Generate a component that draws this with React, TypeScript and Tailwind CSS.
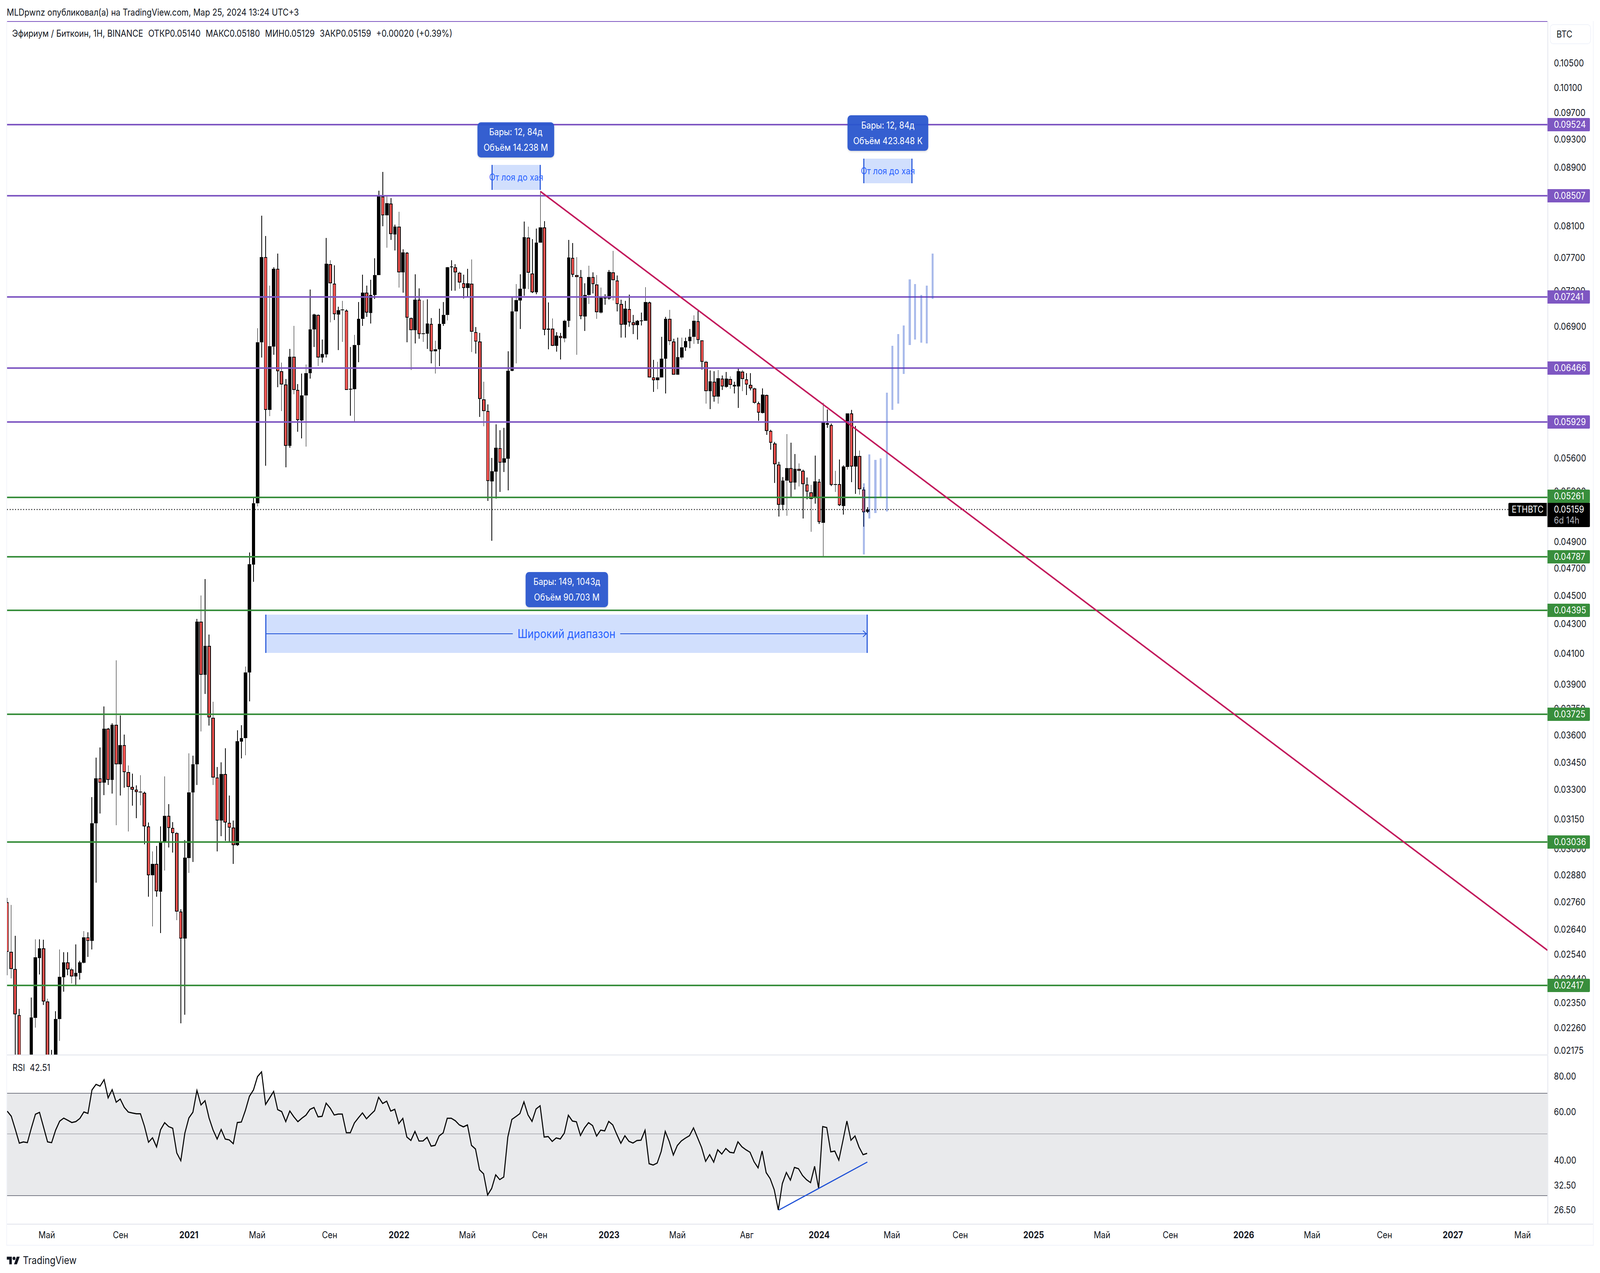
import React from "react";

// [x, high, bodyTop, bodyBottom, low, isRed], in crop coordinates, converted below
type Row = [number, number, number, number, number, 0 | 1];

const rowsLeft: Row[] = [
  [42, 1118, 1130, 1272, 1340, 1], [65, 1138, 1272, 1322, 1348, 1], [88, 1226, 1322, 1452, 1600, 1],
  [112, 1436, 1454, 1600, 1600, 1], [182, 1403, 1460, 1600, 1600, 0], [205, 1236, 1288, 1462, 1490, 0],
  [229, 1236, 1262, 1290, 1337, 0], [253, 1238, 1262, 1414, 1425, 1], [276, 1407, 1414, 1600, 1600, 1],
  [300, 1553, 1600, 1600, 1600, 0], [323, 1443, 1465, 1600, 1600, 0], [347, 1266, 1344, 1465, 1528, 0],
  [370, 1273, 1303, 1345, 1387, 0], [394, 1273, 1303, 1323, 1340, 1], [417, 1318, 1323, 1343, 1363, 1],
  [441, 1251, 1333, 1343, 1368, 0], [464, 1298, 1303, 1333, 1352, 0], [488, 1213, 1231, 1304, 1306, 0],
  [511, 1216, 1231, 1241, 1287, 1], [535, 829, 904, 1241, 1266, 0], [558, 716, 775, 904, 1074, 0],
  [582, 687, 775, 787, 876, 1], [605, 569, 633, 787, 823, 0], [629, 630, 633, 780, 794, 1],
  [653, 617, 622, 780, 819, 0], [676, 437, 622, 735, 909, 1], [700, 595, 680, 735, 824, 0],
  [723, 650, 680, 757, 802, 1], [747, 738, 757, 800, 927, 1], [770, 762, 800, 808, 853, 1],
  [794, 795, 808, 814, 889, 1], [817, 766, 813, 815, 852, 0], [841, 813, 817, 913, 964, 1],
  [864, 902, 913, 1053, 1114, 1], [888, 984, 1020, 1053, 1200, 0], [911, 969, 1020, 1099, 1114, 1],
  [935, 913, 960, 1100, 1219, 0], [958, 769, 883, 957, 1039, 0], [982, 849, 883, 917, 973, 1],
  [1005, 900, 917, 932, 988, 1], [1029, 928, 932, 1157, 1182, 1], [1052, 1150, 1157, 1234, 1477, 1],
  [1076, 952, 1002, 1234, 1453, 0], [1100, 703, 815, 1003, 1046, 0], [1123, 710, 735, 815, 1015, 0],
  [1147, 318, 326, 735, 794, 0], [1170, 251, 326, 478, 641, 1], [1194, 204, 395, 478, 533, 0],
  [1217, 363, 395, 600, 624, 1], [1241, 556, 601, 773, 794, 1], [1264, 743, 773, 896, 984, 1],
  [1288, 729, 763, 896, 941, 0], [1311, 689, 763, 902, 954, 1], [1335, 824, 903, 916, 958, 1],
  [1358, 896, 916, 966, 1020, 1], [1382, 637, 669, 966, 969, 0], [1405, 623, 660, 670, 718, 0],
  [1429, 455, 472, 660, 709, 0], [1452, 128, 161, 472, 554, 0],
];

const rowsMiddle: Row[] = [
  [83, 1370, 1393, 1639, 1708, 0], [102, 690, 746, 1393, 1405, 0], [121, 238, 405, 746, 808, 0],
  [139, 320, 405, 1017, 1242, 1], [158, 519, 762, 1017, 1043, 0], [177, 445, 452, 763, 797, 0],
  [196, 390, 451, 862, 927, 1], [214, 828, 863, 915, 1023, 1], [233, 893, 915, 1162, 1248, 1],
  [252, 773, 804, 1162, 1170, 0], [271, 681, 805, 937, 955, 1], [289, 914, 937, 1059, 1105, 1],
  [308, 872, 960, 1060, 1132, 0], [327, 835, 870, 960, 1165, 0], [346, 535, 695, 871, 892, 0],
  [365, 632, 635, 695, 765, 0], [384, 634, 636, 808, 842, 1], [403, 735, 793, 808, 828, 0],
  [422, 328, 431, 795, 808, 0], [440, 417, 432, 510, 666, 1], [459, 437, 511, 633, 657, 1],
  [478, 604, 618, 635, 778, 0], [497, 580, 615, 618, 745, 0], [516, 614, 619, 937, 937, 1],
  [535, 765, 933, 935, 1041, 0], [553, 717, 757, 935, 1066, 0], [572, 585, 653, 758, 826, 0],
  [591, 475, 547, 653, 681, 0], [610, 519, 548, 627, 645, 1], [629, 495, 556, 628, 671, 0],
  [647, 409, 477, 557, 572, 0], [666, 138, 160, 477, 477, 0], [685, 63, 162, 236, 281, 1],
  [704, 160, 188, 236, 367, 0], [723, 168, 189, 312, 335, 1], [742, 274, 282, 313, 378, 0],
  [760, 223, 283, 466, 527, 1], [779, 373, 386, 466, 547, 0], [798, 384, 387, 648, 746, 1],
  [817, 646, 649, 697, 857, 1], [836, 474, 575, 698, 751, 0], [855, 530, 576, 713, 732, 1],
  [873, 578, 710, 712, 745, 0], [892, 574, 671, 712, 773, 0], [911, 649, 672, 782, 831, 1],
  [930, 740, 775, 782, 872, 0], [948, 612, 673, 775, 842, 0], [967, 585, 637, 673, 681, 0],
  [986, 443, 445, 637, 659, 0], [1005, 417, 442, 444, 539, 0], [1023, 432, 445, 466, 540, 1],
  [1042, 463, 467, 507, 532, 1], [1061, 475, 509, 529, 570, 1], [1080, 452, 510, 529, 567, 0],
  [1099, 414, 511, 704, 785, 1], [1118, 685, 705, 743, 792, 1], [1137, 709, 744, 974, 1046, 1],
  [1155, 905, 975, 1022, 1083, 1], [1174, 996, 1023, 1303, 1383, 1], [1193, 1210, 1264, 1304, 1543, 0],
  [1212, 1075, 1170, 1265, 1373, 0], [1231, 1099, 1171, 1229, 1347, 1], [1249, 1090, 1212, 1230, 1267, 0],
  [1268, 782, 861, 1213, 1341, 0], [1287, 565, 622, 861, 862, 0], [1306, 513, 577, 623, 831, 0],
  [1325, 474, 532, 578, 693, 0], [1343, 262, 325, 532, 560, 0], [1362, 282, 326, 468, 533, 1],
  [1381, 332, 470, 546, 549, 1], [1400, 290, 347, 546, 553, 0], [1419, 140, 285, 347, 347, 0],
  [1438, 260, 285, 696, 718, 1], [1456, 586, 692, 696, 775, 0], [1475, 651, 692, 761, 762, 1],
  [1494, 706, 720, 761, 784, 0], [1513, 708, 721, 729, 815, 1], [1532, 656, 660, 730, 746, 0],
  [1550, 336, 406, 660, 685, 0],
];

const rowsRight: Row[] = [
  [80, 348, 407, 475, 485, 1], [98, 405, 476, 484, 797, 1], [117, 457, 484, 642, 654, 1],
  [136, 510, 556, 643, 701, 0], [155, 439, 484, 556, 593, 0], [174, 466, 484, 512, 550, 1],
  [192, 476, 514, 625, 652, 1], [211, 527, 565, 627, 632, 0], [230, 553, 566, 570, 596, 0],
  [249, 457, 464, 570, 575, 0], [268, 380, 465, 497, 578, 1], [287, 478, 498, 592, 622, 1],
  [305, 575, 592, 676, 728, 1], [324, 580, 612, 676, 728, 0], [343, 555, 613, 666, 684, 1],
  [362, 637, 667, 678, 713, 1], [381, 657, 660, 678, 735, 0], [400, 627, 658, 660, 679, 0],
  [418, 525, 585, 660, 660, 0], [437, 583, 586, 888, 888, 1], [456, 817, 888, 899, 945, 1],
  [475, 825, 887, 899, 935, 0], [494, 724, 812, 888, 888, 0], [512, 645, 652, 813, 952, 0],
  [531, 616, 653, 742, 757, 1], [550, 732, 743, 877, 877, 1], [569, 728, 806, 877, 877, 0],
  [588, 728, 766, 808, 816, 0], [606, 728, 742, 767, 781, 0], [625, 693, 724, 742, 770, 0],
  [644, 638, 660, 724, 752, 0], [663, 620, 661, 737, 753, 1], [682, 738, 738, 824, 856, 1],
  [701, 820, 824, 943, 992, 1], [719, 860, 903, 943, 1015, 0], [738, 862, 904, 965, 985, 1],
  [757, 858, 891, 965, 992, 0], [776, 880, 892, 924, 938, 1], [795, 866, 892, 925, 928, 0],
  [814, 883, 893, 918, 933, 1], [832, 905, 918, 924, 952, 1], [851, 853, 863, 924, 1010, 0],
  [870, 858, 864, 894, 942, 1], [889, 870, 895, 916, 958, 1], [908, 871, 917, 932, 940, 1],
  [927, 928, 932, 990, 994, 1], [945, 984, 991, 1028, 1062, 1], [964, 932, 957, 1030, 1032, 0],
  [983, 957, 958, 1103, 1118, 1], [1002, 1098, 1103, 1150, 1177, 1], [1021, 1146, 1152, 1235, 1311, 1],
  [1039, 1226, 1237, 1398, 1446, 1], [1058, 1287, 1302, 1398, 1420, 0], [1077, 1115, 1251, 1302, 1443, 0],
  [1096, 1150, 1251, 1310, 1366, 1], [1115, 1195, 1255, 1310, 1338, 0], [1134, 1232, 1255, 1262, 1325, 1],
  [1152, 1258, 1263, 1315, 1453, 1], [1171, 1289, 1317, 1346, 1377, 1], [1190, 1318, 1348, 1375, 1507, 1],
  [1209, 1201, 1305, 1368, 1394, 0], [1228, 1295, 1306, 1467, 1476, 1], [1246, 990, 1070, 1470, 1604, 0],
  [1265, 1016, 1071, 1077, 1089, 1], [1284, 1072, 1078, 1318, 1324, 1], [1303, 1262, 1315, 1319, 1347, 0],
  [1322, 1217, 1316, 1401, 1403, 1], [1340, 1240, 1245, 1404, 1438, 0], [1359, 1031, 1031, 1246, 1258, 0],
  [1378, 1018, 1032, 1245, 1308, 1], [1397, 1082, 1202, 1245, 1355, 0], [1416, 1181, 1203, 1336, 1358, 1],
  [1435, 1328, 1338, 1428, 1486, 1], [1453, 1408, 1417, 1427, 1431, 0],
];

type Candle = { x: number; high: number; top: number; bottom: number; low: number; red: boolean };

const toCandles = (rows: Row[], x0: number, sx: number, y0: number, sy: number): Candle[] =>
  rows.map(([x, high, top, bottom, low, red]) => ({
    x: Math.round(x0 + x / sx),
    high: Math.round(y0 + high / sy),
    top: Math.round(y0 + top / sy),
    bottom: Math.round(y0 + bottom / sy),
    low: Math.round(y0 + low / sy),
    red: red === 1,
  }));

const candles: Candle[] = [
  ...toCandles(rowsLeft, 0, 1.96, 1300, 1.12),
  ...toCandles(rowsMiddle, 700, 1.568, 400, 1.568),
  ...toCandles(rowsRight, 1650, 1.568, 400, 1.568),
];

const rsiLeft = [
  500, 533, 620, 711, 703, 708, 610, 520, 508, 605, 703, 708, 625, 566, 546, 560, 575, 569, 548, 505, 515, 360, 323,
  335, 292, 412, 358, 441, 420, 475, 506, 512, 517, 517, 600, 705, 676, 736, 622, 576, 602, 613, 776, 827, 645, 545,
  507, 363, 459, 431, 545, 625, 684, 621, 684, 690, 715, 575, 572, 495, 402, 360, 272,
];
const rsiRest = [
  70, 320, 270, 220, 360, 375, 452, 370, 415, 452, 425, 402, 358, 343, 415, 411, 310, 348, 401, 394, 394, 537, 537,
  462, 422, 385, 430, 398, 368, 265, 312, 295, 371, 357, 467, 427, 570, 596, 527, 601, 600, 572, 640, 634, 562, 538,
  426, 426, 445, 477, 492, 477, 634, 662, 822, 852, 1015, 965, 860, 897, 877, 570, 435, 413, 390, 300, 400, 450, 355,
  330, 570, 566, 604, 577, 585, 540, 403, 447, 453, 558, 500, 460, 482, 563, 517, 523, 450, 477, 550, 618, 560, 603,
  616, 597, 594, 518, 775, 785, 770, 680, 527, 605, 708, 635, 600, 578, 560, 500, 575, 650, 757, 705, 763, 668, 701,
  658, 687, 692, 607, 645, 668, 687, 760, 807, 677, 843, 890, 975, 1130, 928, 842, 901, 803, 813, 865, 898, 920, 795,
  965, 490, 497, 684, 678, 748, 600, 447, 595, 562, 647, 706, 695,
];
const rsiPoints = [...rsiLeft.map((v) => 2650 + v / 2.58), ...rsiRest.map((v) => 2720 + v / 3)]
  .map((y, i) => `${(21.4 + i * 11.99).toFixed(1)},${y.toFixed(1)}`)
  .join(" ");

const PURPLE = "#7e57c2";
const GREEN = "#388e3c";

const levels = [
  { y: 319, color: PURPLE },
  { y: 501, color: PURPLE },
  { y: 760, color: PURPLE },
  { y: 942, color: PURPLE },
  { y: 1080, color: PURPLE },
  { y: 1273, color: GREEN },
  { y: 1425, color: GREEN },
  { y: 1562, color: GREEN },
  { y: 1828, color: GREEN },
  { y: 2155, color: GREEN },
  { y: 2522, color: GREEN },
];

// projected price bars: x, top, bottom
const ghostBars = [
  [2566, 1237, 1419], [2582, 1163, 1327], [2600, 1177, 1313], [2616, 1173, 1271], [2634, 1005, 1309],
  [2650, 885, 1049], [2668, 855, 1033], [2684, 833, 957], [2702, 715, 883], [2718, 727, 869],
  [2736, 755, 877], [2752, 731, 879], [2770, 649, 765],
];

const priceTicks: [number, string][] = [
  [162, "0.10500"], [225, "0.10100"], [289, "0.09700"], [357, "0.09300"], [429, "0.08900"], [579, "0.08100"],
  [660, "0.07700"], [745, "0.07300"], [836, "0.06900"], [1173, "0.05600"], [1258, "0.05300"], [1387, "0.04900"],
  [1455, "0.04700"], [1525, "0.04500"], [1597, "0.04300"], [1673, "0.04100"], [1752, "0.03900"], [1814, "0.03750"],
  [1882, "0.03600"], [1952, "0.03450"], [2021, "0.03300"], [2097, "0.03150"], [2173, "0.03000"], [2240, "0.02880"],
  [2309, "0.02760"], [2379, "0.02640"], [2443, "0.02540"], [2506, "0.02440"], [2567, "0.02350"], [2631, "0.02260"],
  [2689, "0.02175"],
];

const priceTags: { y: number; text: string; bg: string }[] = [
  { y: 319, text: "0.09524", bg: "bg-[#7e57c2]" },
  { y: 501, text: "0.08507", bg: "bg-[#7e57c2]" },
  { y: 760, text: "0.07241", bg: "bg-[#7e57c2]" },
  { y: 942, text: "0.06466", bg: "bg-[#7e57c2]" },
  { y: 1080, text: "0.05929", bg: "bg-[#7e57c2]" },
  { y: 1270, text: "0.05261", bg: "bg-[#388e3c]" },
  { y: 1425, text: "0.04787", bg: "bg-[#388e3c]" },
  { y: 1562, text: "0.04395", bg: "bg-[#388e3c]" },
  { y: 1828, text: "0.03725", bg: "bg-[#388e3c]" },
  { y: 2155, text: "0.03036", bg: "bg-[#388e3c]" },
  { y: 2522, text: "0.02417", bg: "bg-[#388e3c]" },
];

const rsiTicks: [number, string][] = [
  [2755, "80.00"], [2846, "60.00"], [2970, "40.00"], [3034, "32.50"], [3097, "26.50"],
];

const timeTicks: [number, string, boolean][] = [
  [139, "Май", false], [358, "Сен", false], [561, "2021", true], [764, "Май", false], [979, "Сен", false],
  [1185, "2022", true], [1388, "Май", false], [1603, "Сен", false], [1809, "2023", true], [2012, "Май", false],
  [2218, "Авг", false], [2433, "2024", true], [2649, "Май", false], [2852, "Сен", false], [3070, "2025", true],
  [3273, "Май", false], [3476, "Сен", false], [3694, "2026", true], [3897, "Май", false], [4112, "Сен", false],
  [4315, "2027", true], [4522, "Май", false],
];

const CandleMark = ({ c }: { c: Candle }) => (
  <g>
    <rect x={c.x - 1} y={c.high} width={2} height={Math.max(c.low - c.high, 1)} fill="#000" />
    {c.top < 2700 && (
      <>
        <rect x={c.x - 5} y={c.top} width={10} height={Math.max(c.bottom - c.top, 2)} fill="#000" />
        {c.red && c.bottom - c.top > 4 && (
          <rect x={c.x - 3} y={c.top + 2} width={6} height={c.bottom - c.top - 4} fill="#ef5350" />
        )}
      </>
    )}
  </g>
);

const InfoBox = ({ className, lines }: { className: string; lines: string[] }) => (
  <div
    className={`absolute flex flex-col items-center justify-center gap-[12px] rounded-[10px] bg-[#2a56ce]/95 text-[24px] leading-[28px] text-white shadow-md ${className}`}
  >
    {lines.map((line) => (
      <div key={line} className="whitespace-nowrap">
        {line}
      </div>
    ))}
  </div>
);

const RangeBox = ({ className }: { className: string }) => (
  <div
    className={`absolute flex items-center justify-center border-x-[3px] border-[#1c4fd6] bg-[#d1dffd] text-[24px] whitespace-nowrap text-[#2962ff] ${className}`}
  >
    От лоя до хая
  </div>
);

const AxisText = ({ y, offset, children }: { y: number; offset: number; children: React.ReactNode }) => (
  <div className="absolute left-[17px] -translate-y-1/2 text-[24px] leading-[28px]" style={{ top: y - offset }}>
    {children}
  </div>
);

export default function App() {
  // the layout is measured at 4752 wide; the browser may give a narrower window, so fit it horizontally
  const fit = window.innerWidth / 4752;

  return (
    <div className="h-screen w-screen overflow-hidden bg-white">
      <div
        className="flex h-[3258px] w-[4752px] origin-top-left flex-col bg-white font-['Inter','Noto_Sans',sans-serif] text-[#131722]"
        style={{ transform: `scaleX(${fit})` }}
      >
        <header className="flex h-[54px] items-center pl-[20px] pt-[10px] text-[24px] leading-[28px]">
          MLDpwnz опубликовал(а) на TradingView.com, Мар 25, 2024 13:24 UTC+3
        </header>

        <main className="ml-[19px] grid h-[3134px] w-[4714px] grid-cols-[4575px_135px] grid-rows-[2645px_433px_54px] border-x-2 border-b-2 border-[#f0f3fa]">
          <section className="relative">
            <svg width={4575} height={2645} viewBox="21 54 4575 2645" className="block">
              <rect x={21} y={54} width={4575} height={2} fill={PURPLE} />
              <line x1={21} y1={1304} x2={4480} y2={1304} stroke="#000" strokeWidth={2.5} strokeDasharray="2.5 5.5" />
              <g shapeRendering="crispEdges">
                {candles.map((c) => (
                  <CandleMark key={`${c.x}-${c.top}`} c={c} />
                ))}
                {levels.map((l) => (
                  <rect key={l.y} x={21} y={l.y - 2} width={4575} height={4} fill={l.color} />
                ))}
                {ghostBars.map(([x, top, bottom]) => (
                  <rect key={x} x={x - 3} y={top} width={6} height={bottom - top} fill="#2a56ce" fillOpacity={0.4} />
                ))}
              </g>
              <line x1={1605} y1={490} x2={4596} y2={2432} stroke="#c2185b" strokeWidth={4} />
            </svg>

            <div className="absolute left-[15px] top-[18px] flex gap-[15px] text-[24px] leading-[28px] whitespace-nowrap">
              <span>Эфириум / Биткоин, 1Н, BINANCE</span>
              <span>ОТКР0.05140</span>
              <span>МАКС0.05180</span>
              <span>МИН0.05129</span>
              <span>ЗАКР0.05159</span>
              <span>+0.00020 (+0.39%)</span>
            </div>

            <InfoBox className="left-[1397px] top-[259px] h-[90px] w-[228px]" lines={["Бары: 12, 84д", "Объём 14.238 M"]} />
            <InfoBox className="left-[2496px] top-[241px] h-[91px] w-[240px]" lines={["Бары: 12, 84д", "Объём 423.848 K"]} />
            <InfoBox className="left-[1540px] top-[1410px] h-[90px] w-[245px]" lines={["Бары: 149, 1043д", "Объём 90.703 M"]} />

            <RangeBox className="left-[1439px] top-[368px] h-[64px] w-[146px]" />
            <RangeBox className="left-[2543px] top-[352px] h-[63px] w-[146px]" />

            <div className="absolute left-[767px] top-[1519px] flex h-[98px] w-[1789px] items-center gap-[14px] border-x-[3px] border-[#1c4fd6] bg-[#d1dffd] text-[31px] whitespace-nowrap text-[#2962ff]">
              <div className="h-[2px] flex-1 bg-[#1c4fd6]" />
              <span>Широкий диапазон</span>
              <div className="relative h-[2px] flex-1 bg-[#1c4fd6]">
                <svg width={12} height={18} viewBox="0 0 12 18" className="absolute -top-[8px] right-0">
                  <path d="M1 1l10 8-10 8" fill="none" stroke="#1c4fd6" strokeWidth={2} />
                </svg>
              </div>
            </div>

            <div className="absolute right-[2px] top-[1233px] flex h-[34px] w-[114px] items-center justify-center rounded-l-[3px] bg-black text-[24px] text-white">
              ETHBTC
            </div>
          </section>

          <aside className="relative border-l-2 border-[#e0e3eb]">
            <div className="absolute left-[5px] right-[6px] top-[8px] flex h-[51px] items-center rounded-[10px] border-2 border-[#f0f3fa] pl-[18px] text-[24px]">
              BTC
            </div>
            {priceTicks.map(([y, text]) => (
              <AxisText key={text} y={y} offset={54}>
                {text}
              </AxisText>
            ))}
            {priceTags.map((t) => (
              <div
                key={t.text}
                className={`absolute -left-[2px] flex h-[34px] w-[126px] -translate-y-1/2 items-center rounded-r-[3px] pl-[19px] text-[24px] text-white ${t.bg}`}
                style={{ top: t.y - 54 }}
              >
                {t.text}
              </div>
            ))}
            <div className="absolute -left-[2px] top-[1233px] flex h-[62px] w-[126px] flex-col justify-center rounded-br-[3px] bg-black pl-[19px] text-[24px] leading-[28px] text-white">
              <span>0.05159</span>
              <span className="text-[#b2b5be]">6d 14h</span>
            </div>
          </aside>

          <section className="relative border-t-2 border-[#e0e3eb]">
            <svg width={4575} height={431} viewBox="21 2701 4575 431" className="block">
              <rect x={21} y={2798} width={4575} height={262} fill="#e9eaec" />
              <rect x={21} y={2797} width={4575} height={2} fill="#787b86" />
              <rect x={21} y={2901} width={4575} height={2} fill="#b2b3ba" />
              <rect x={21} y={3059} width={4575} height={2} fill="#787b86" />
              <polyline points={rsiPoints} fill="none" stroke="#000" strokeWidth={3} strokeLinejoin="miter" />
              <line x1={2313} y1={3097} x2={2576} y2={2974} stroke="#1c4fd6" strokeWidth={3} />
            </svg>
            <div className="absolute left-[16px] top-[18px] flex gap-[14px] text-[24px] leading-[28px]">
              <span>RSI</span>
              <span>42.51</span>
            </div>
          </section>

          <aside className="relative border-l-2 border-t-2 border-t-transparent border-l-[#e0e3eb]">
            {rsiTicks.map(([y, text]) => (
              <AxisText key={text} y={y} offset={2701}>
                {text}
              </AxisText>
            ))}
          </aside>

          <footer className="relative col-span-2 border-t-2 border-[#e0e3eb]">
            {timeTicks.map(([x, text, bold]) => (
              <span
                key={`${x}`}
                className={`absolute top-[13px] -translate-x-1/2 text-[24px] leading-[28px] ${bold ? "font-bold" : ""}`}
                style={{ left: x - 21 }}
              >
                {text}
              </span>
            ))}
          </footer>
        </main>

        <div className="ml-[20px] mt-[22px] flex items-center gap-[9px] text-[27px] leading-[32px]">
          <svg width={39} height={20} viewBox="0 7 36 18" fill="#131722">
            <path d="M14 25H7V14H0V7h14v18zM28 25h-8l7.5-18h8L28 25z" />
            <circle cx={20} cy={11} r={4} />
          </svg>
          <span>TradingView</span>
        </div>
      </div>
    </div>
  );
}
